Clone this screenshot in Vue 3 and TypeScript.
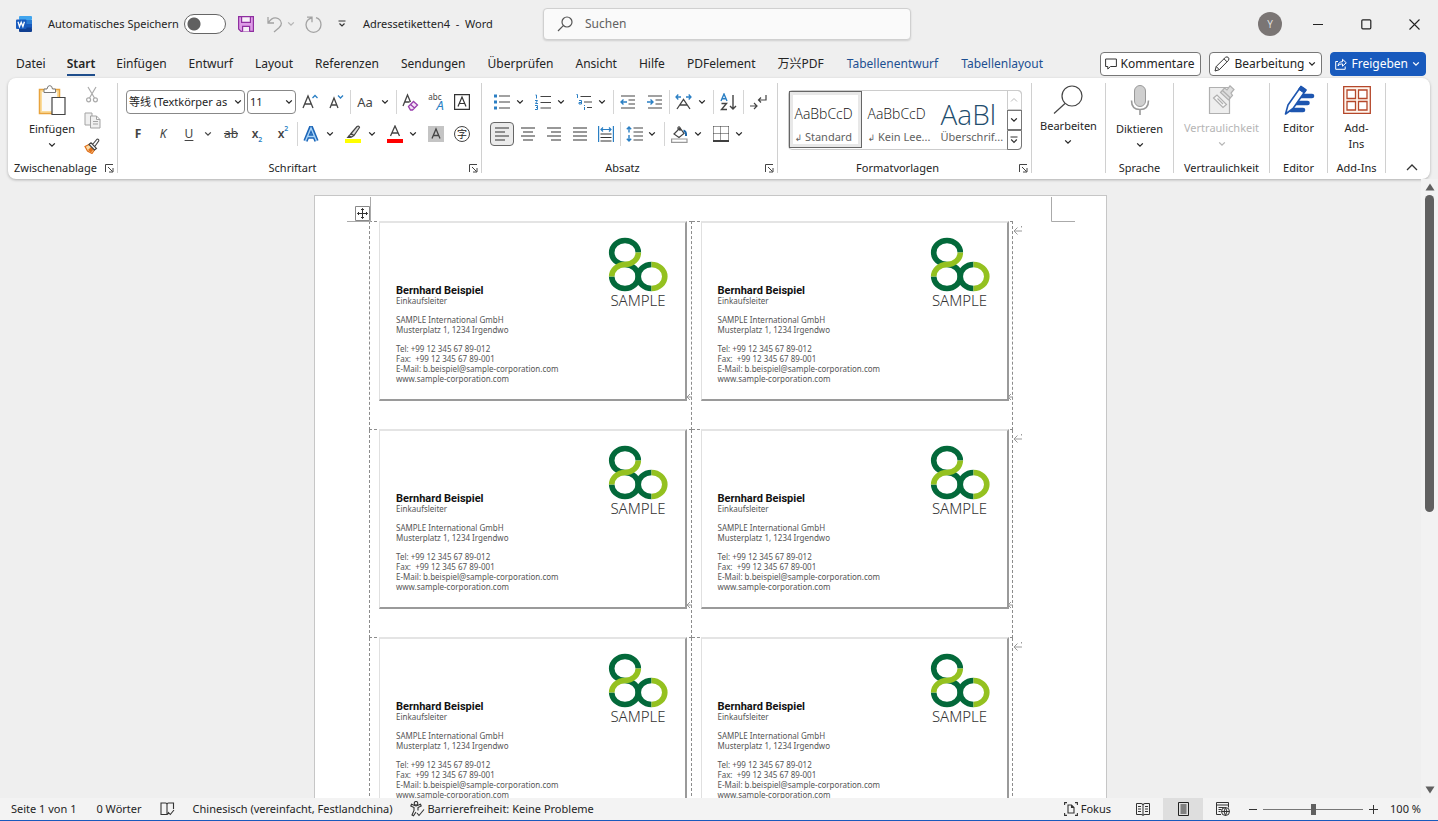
<script setup lang="ts">
import { h, ref } from 'vue'

interface Tab {
  label: string
  active?: boolean
  contextual?: boolean
}

const tabs: Tab[] = [
  { label: 'Datei' },
  { label: 'Start', active: true },
  { label: 'Einfügen' },
  { label: 'Entwurf' },
  { label: 'Layout' },
  { label: 'Referenzen' },
  { label: 'Sendungen' },
  { label: 'Überprüfen' },
  { label: 'Ansicht' },
  { label: 'Hilfe' },
  { label: 'PDFelement' },
  { label: '万兴PDF' },
  { label: 'Tabellenentwurf', contextual: true },
  { label: 'Tabellenlayout', contextual: true },
]

const contact: string[] = [
  'Tel: +99 12 345 67 89-012',
  'Fax:  +99 12 345 67 89-001',
  'E-Mail: b.beispiel@sample-corporation.com',
  'www.sample-corporation.com',
]

const zoom = ref(50)

const Chevron = () =>
  h('svg', { width: 8, height: 6, viewBox: '0 0 8 6', fill: 'none', stroke: 'currentColor', 'stroke-width': 1.3 }, [
    h('path', { d: 'M1.2 1.4 4 4.2 6.8 1.4' }),
  ])

const Launcher = () =>
  h('svg', { width: 9, height: 9, viewBox: '0 0 9 9', fill: 'none', stroke: '#444' }, [
    h('path', { d: 'M.5 8V.5H8M3 3l4.5 4.5M8 4v4H4' }),
  ])
</script>

<template>
  <div class="word">
    <header class="titlebar">
      <div class="quick">
        <svg class="logo" width="16" height="16" viewBox="0 0 16 16">
          <rect x="3" width="13" height="4" rx="1" fill="#41a5ee" />
          <rect x="3" y="4" width="13" height="4" fill="#2b7cd3" />
          <rect x="3" y="8" width="13" height="4" fill="#185abd" />
          <rect x="3" y="11.500" width="13" height="4.500" rx="1" fill="#103f91" />
          <rect y="3.500" width="10.500" height="9.500" rx="1" fill="#185abd" />
          <path d="M2 5.800 3.500 10.600 5.200 6.200 6.900 10.600 8.400 5.800" fill="none" stroke="#fff" stroke-width="1.300" />
        </svg>
        <label class="autosave">Automatisches Speichern <input type="checkbox" role="switch" class="switch" /></label>
        <button class="ico" aria-label="Speichern">
          <svg width="16" height="16" viewBox="0 0 16 16" fill="none" stroke="#8f2fa0" stroke-width="1.200">
            <path d="M.6.600h14.800v14.800H3L.600 13z" fill="#dd9be6" />
            <path d="M3.600.600h8.800v5.800H3.600zM4.600 15.400v-5h7v5" fill="#f7f0f8" />
          </svg>
        </button>
        <button class="ico undo" aria-label="Rückgängig">
          <svg width="16" height="17" viewBox="0 0 16 17" fill="none" stroke="#a3a3a3" stroke-width="1.300">
            <path d="M1 1v6h6M1.200 6.800C4 2.500 8 .800 11.500 2.800c4 2.400 3.500 6.200.5 9L7 16" />
          </svg>
        </button>
        <button class="ico faint undo-menu" aria-label="Rückgängig-Liste"><Chevron /></button>
        <button class="ico redo" aria-label="Wiederholen">
          <svg width="18" height="17" viewBox="0 0 18 17" fill="none" stroke="#a3a3a3" stroke-width="1.300">
            <path d="M2 1.200h5v5M7 1.600C3 3 1 5.500 1 8.800a7.500 7.500 0 0 0 15 0C16 5 14 2.500 11 1.600" />
          </svg>
        </button>
        <button class="ico customize" aria-label="Symbolleiste anpassen">
          <svg width="8" height="8" viewBox="0 0 8 8" fill="none" stroke="#333" stroke-width="1.200"><path d="M.5 1h7M1.500 3.500 4 6l2.500-2.500" /></svg>
        </button>
        <span class="doc-title">Adressetiketten4&nbsp; - &nbsp;Word</span>
      </div>
      <label class="search">
        <svg width="16" height="16" viewBox="0 0 16 16" fill="none" stroke="#555" stroke-width="1.200"><circle cx="10" cy="6" r="5" /><path d="M6.300 9.600 1 15" /></svg>
        <input type="text" placeholder="Suchen" aria-label="Suchen" />
      </label>
      <div class="window">
        <button class="avatar">Y</button>
        <button aria-label="Minimieren"><svg width="11" height="11" viewBox="0 0 11 11" stroke="#222" fill="none"><path d="M0 5.500h10" /></svg></button>
        <button aria-label="Maximieren"><svg width="11" height="11" viewBox="0 0 11 11" stroke="#222" fill="none" stroke-width="1.200"><rect x=".8" y=".8" width="9" height="9" rx="1" /></svg></button>
        <button aria-label="Schließen"><svg width="11" height="11" viewBox="0 0 11 11" stroke="#222" fill="none" stroke-width="1.100"><path d="m.5.500 10 10M10.500.500l-10 10" /></svg></button>
      </div>
    </header>

    <nav class="tabs">
      <button v-for="t in tabs" :key="t.label" class="tab" :class="{ active: t.active, contextual: t.contextual }">{{ t.label }}</button>
      <div class="actions">
        <button class="action comments">
          <svg width="12" height="12" viewBox="0 0 12 12" fill="none" stroke="#333"><path d="M.6 1h10.800v7.500H5.500L2.800 11V8.500H.600z" /></svg>
          Kommentare
        </button>
        <button class="action">
          <svg width="16" height="16" viewBox="0 0 16 16" fill="none" stroke="#333"><path d="M1 15l1.200-4.500L11.500 1.300q1.600-1 2.800.2t.2 2.800L5.300 13.700zM2.200 10.500l3.100 3.200M10 2.800l3.100 3.100" /></svg>
          Bearbeitung <Chevron />
        </button>
        <button class="action primary">
          <svg width="12" height="12" viewBox="0 0 12 12" fill="none" stroke="#fff"><path d="M3 3.500H.7v7.800h9.500V8.500M3 8c.3-3 2-4.300 4.500-4.300V1.300l3.800 3.500-3.800 3.400V5.900C5.500 5.900 4 6.500 3 8z" /></svg>
          Freigeben <Chevron />
        </button>
      </div>
    </nav>

    <section class="ribbon" aria-label="Menüband">
      <!-- Zwischenablage -->
      <div class="group clipboard">
        <div class="body">
          <button class="big">
            <svg width="28" height="31" viewBox="0 0 28 31" fill="none">
              <path d="M1.500 4.500h20v24h-20z" stroke="#e8a33d" stroke-width="1.500" fill="#fbdc9c" />
              <path d="M4 7h15v19H4z" fill="#fafafa" />
              <path d="M6 7.500V4h3q.5-3.400 2.800-3.400T14.500 4h3v3.500z" fill="#fff" stroke="#777" />
              <path d="M14 12.500h13v17H14z" fill="#fff" stroke="#444" stroke-width="1.200" />
            </svg>
            <span>Einfügen</span><Chevron />
          </button>
          <div class="stack">
            <button class="ico" aria-label="Ausschneiden">
              <svg width="12" height="17" viewBox="0 0 12 17" fill="none" stroke="#aaa" stroke-width="1.200"><path d="M2 1l6.500 11M10 1 3.500 12" /><circle cx="2.600" cy="13.800" r="2" /><circle cx="9.400" cy="13.800" r="2" /></svg>
            </button>
            <button class="ico" aria-label="Kopieren">
              <svg width="17" height="17" viewBox="0 0 17 17" fill="#f0f0f0" stroke="#a3a3a3"><path d="M1 1h7v12H1z" /><path d="M6.500 4h6l3.500 3.500V16H6.500zM12.500 4v3.500H16M9 9.500h5M9 12h5" /></svg>
            </button>
            <button class="ico" aria-label="Format übertragen">
              <svg width="16" height="16" viewBox="0 0 16 16" fill="none"><path d="M1 8.500 6 6l5 5-3 4.500L3.500 13z" fill="#fbdca8" stroke="#e0701a" stroke-width="1.200" /><path d="M4 12l3 2.500 3-3.500-3-2z" fill="#e0701a" /><path d="M5 6.500 7 4.800l5.500 5.700-2 1.500zM8.500 6.500 13 1.200q2-.4 1.800 1.600L10.800 8.500" stroke="#444" stroke-width="1.100" fill="#fff" /></svg>
            </button>
          </div>
        </div>
        <footer>Zwischenablage<button class="launch" aria-label="Zwischenablage öffnen"><Launcher /></button></footer>
      </div>

      <!-- Schriftart -->
      <div class="group font">
        <div class="body rows">
          <div class="row font-a">
            <label class="combo"><select aria-label="Schriftart"><option>等线 (Textkörper as</option></select><Chevron /></label>
            <label class="combo size"><select aria-label="Schriftgrad"><option>11</option></select><Chevron /></label>
            <button class="ico" aria-label="Schrift vergrößern"><svg width="16" height="18" viewBox="0 0 16 18" fill="none" stroke="#444" stroke-width="1.300"><path d="m1 15 5-12 5 12M3 11h6" /><path d="M10.500 5 13 2.500 15.500 5" stroke="#2a7fc4" /></svg></button>
            <button class="ico" aria-label="Schrift verkleinern"><svg width="16" height="18" viewBox="0 0 16 18" fill="none" stroke="#444" stroke-width="1.300"><path d="M2 15 6 5l4 10M3.500 12h5" /><path d="M10 2.500 12.500 5 15 2.500" stroke="#2a7fc4" /></svg></button>
            <i class="sep"></i>
            <button class="split"><span class="glyph">Aa</span><Chevron /></button>
            <i class="sep"></i>
            <button class="ico" aria-label="Formatierung löschen"><svg width="18" height="18" viewBox="0 0 18 18" fill="none" stroke="#444" stroke-width="1.300"><path d="m2 13 4.500-11L9.500 9M3.500 9h5" /><path d="m7.500 13.500 5-5 4 3.500-5 5h-2zM9.500 11.500l4 3.500" stroke="#9a3fae" fill="#f4e3f7" /></svg></button>
            <button class="ico phonetic" aria-label="Phonetische Zeichen"><small>abc</small><b>A</b></button>
            <button class="ico" aria-label="Zeichenrahmen"><svg width="16" height="16" viewBox="0 0 16 16" fill="none" stroke="#333" stroke-width="1.200"><path d="M.6.600h14.800v14.800H.600zM4 12.500l4-9.500 4 9.500M5.500 9.500h5" /></svg></button>
          </div>
          <div class="row font-b">
            <button class="ico fmt bold">F</button>
            <button class="ico fmt italic">K</button>
            <button class="split fmt"><span class="glyph under">U</span><Chevron /></button>
            <button class="ico fmt strike">ab</button>
            <button class="ico fmt script">x<sub>2</sub></button>
            <button class="ico fmt script">x<sup>2</sup></button>
            <i class="sep"></i>
            <button class="split" aria-label="Texteffekte"><span class="glyph"><svg width="16" height="16" viewBox="0 0 16 16" fill="none"><path d="M2.500 15 8 1.500 13.500 15M4.500 10.500h7" stroke="#1d66b8" stroke-width="4.400" /><path d="M2.500 15 8 2l5.500 13M4.500 10.500h7" stroke="#a9d4f8" stroke-width="1.400" /></svg></span><Chevron /></button>
            <button class="split" aria-label="Texthervorhebung"><span class="glyph"><svg width="16" height="18" viewBox="0 0 16 18" fill="none"><path d="M6 8.500 12 1.500q2-1 2.500 1L9 10.500zM6 8.500l-2 2.500 2.500 1L9 10.500" stroke="#444" stroke-width="1.200" fill="#ddd" /><path d="M3.500 10.500 1.500 13h4l1-1z" fill="#444" /><path d="M0 14h16v4H0z" fill="#ff0" /></svg></span><Chevron /></button>
            <button class="split" aria-label="Schriftfarbe"><span class="glyph"><svg width="16" height="18" viewBox="0 0 16 18" fill="none"><path d="m3.500 11 4.500-10 4.500 10M5 8h6" stroke="#444" stroke-width="1.300" /><path d="M0 14h16v4H0z" fill="red" /></svg></span><Chevron /></button>
            <button class="ico" aria-label="Zeichenschattierung"><svg width="16" height="16" viewBox="0 0 16 16" fill="none" stroke="#444" stroke-width="1.300"><path d="M0 0h16v16H0z" fill="#c4c4c4" stroke="none" /><path d="m4 12.500 4-9.500 4 9.500M5.500 9.500h5" /></svg></button>
            <button class="ico enclosed">字</button>
          </div>
        </div>
        <footer>Schriftart<button class="launch" aria-label="Schriftart öffnen"><Launcher /></button></footer>
      </div>

      <!-- Absatz -->
      <div class="group paragraph">
        <div class="body rows">
          <div class="row para-a">
            <button class="split" aria-label="Aufzählung"><span class="glyph"><svg width="16" height="16" viewBox="0 0 16 16"><path d="M0 .5h3v3H0zM0 6.500h3v3H0zM0 12.500h3v3H0z" fill="#2a7fc4" /><path d="M5 2h11M5 8h11M5 14h11" stroke="#444" stroke-width="1.200" /></svg></span><Chevron /></button>
            <button class="split" aria-label="Nummerierung"><span class="glyph"><svg width="16" height="16" viewBox="0 0 16 16" fill="none" stroke="#2a7fc4"><path d="M.5 1h1v3.500M0 6.500h2.500L.5 9.500h2.500M0 11.500h2.500v4H0M1 13.500h1.500" /><path d="M5.500 2.500H16M5.500 8.500H16M5.500 14H16" stroke="#444" stroke-width="1.200" /></svg></span><Chevron /></button>
            <button class="split" aria-label="Liste mit mehreren Ebenen"><span class="glyph"><svg width="16" height="16" viewBox="0 0 16 16" fill="none" stroke="#2a7fc4"><path d="M.5.500h1V4M3 6.500h2.500v3.500H3V8.500h2.500M8.500 11v1M8.500 13v3" /><path d="M4.500 2.500H15M8 8h8M11 13.500h5" stroke="#444" stroke-width="1.200" /></svg></span><Chevron /></button>
            <i class="sep"></i>
            <button class="ico" aria-label="Einzug verkleinern"><svg width="16" height="14" viewBox="0 0 16 14" fill="none" stroke="#444" stroke-width="1.200"><path d="M1 1h14M8.500 5H15M8.500 9H15M1 13h14" /><path d="M7 7H1M3.500 4.500 1 7l2.500 2.500" stroke="#2a7fc4" stroke-width="1.400" /></svg></button>
            <button class="ico" aria-label="Einzug vergrößern"><svg width="16" height="14" viewBox="0 0 16 14" fill="none" stroke="#444" stroke-width="1.200"><path d="M1 1h14M8.500 5H15M8.500 9H15M1 13h14" /><path d="M0 7h6M3.500 4.500 6 7 3.500 9.500" stroke="#2a7fc4" stroke-width="1.400" /></svg></button>
            <i class="sep"></i>
            <button class="split" aria-label="Asiatisches Layout"><span class="glyph"><svg width="17" height="16" viewBox="0 0 17 16" fill="none" stroke="#444" stroke-width="1.300"><path d="m2 15 6.500-9.500L15 15M5 11h7" /><path d="M6 3H1M3.300.500 1 3l2.300 2.500M11 3h5M13.700.500 16 3l-2.300 2.500" stroke="#2a7fc4" /></svg></span><Chevron /></button>
            <i class="sep"></i>
            <button class="ico" aria-label="Sortieren"><svg width="17" height="18" viewBox="0 0 17 18" fill="none" stroke="#444" stroke-width="1.400"><path d="M1.500 10.500h5l-5 6h5.500M13 2v14M10 13l3 3 3-3" /><path d="m1 8 3-7 3 7M2 5.700h4" stroke="#2a7fc4" /></svg></button>
            <i class="sep"></i>
            <button class="ico" aria-label="Absatzmarken"><svg width="17" height="17" viewBox="0 0 17 17" fill="none" stroke="#444" stroke-width="1.200"><path d="M16 1v5H8.500M11 3.500 8.500 6 11 8.500M0 12h6.500M4 9l3 3-3 3" /></svg></button>
          </div>
          <div class="row para-b">
            <button class="ico pressed" aria-label="Linksbündig"><svg width="16" height="14" viewBox="0 0 16 14" stroke="#333" stroke-width="1.200"><path d="M1 1h14M1 5h10M1 9h14M1 13h10" /></svg></button>
            <button class="ico" aria-label="Zentriert"><svg width="16" height="14" viewBox="0 0 16 14" stroke="#333" stroke-width="1.200"><path d="M1 1h14M3 5h10M1 9h14M3 13h10" /></svg></button>
            <button class="ico" aria-label="Rechtsbündig"><svg width="16" height="14" viewBox="0 0 16 14" stroke="#333" stroke-width="1.200"><path d="M1 1h14M5 5h10M1 9h14M5 13h10" /></svg></button>
            <button class="ico" aria-label="Blocksatz"><svg width="16" height="14" viewBox="0 0 16 14" stroke="#333" stroke-width="1.200"><path d="M1 1h14M1 5h14M1 9h14M1 13h14" /></svg></button>
            <button class="ico" aria-label="Verteilt"><svg width="16" height="16" viewBox="0 0 16 16" fill="none" stroke="#333" stroke-width="1.200"><path d="M2.500 8h11M2.500 11.500h11M2.500 15h11" /><path d="M.6 0v16M15.400 0v16M3 3.500h10M5 1.500l-2 2 2 2M11 1.500l2 2-2 2" stroke="#2a7fc4" /></svg></button>
            <i class="sep"></i>
            <button class="split" aria-label="Zeilenabstand"><span class="glyph"><svg width="17" height="16" viewBox="0 0 17 16" fill="none" stroke="#444" stroke-width="1.200"><path d="M7.500 2H17M7.500 6H17M7.500 10H17M7.500 14H17" /><path d="M3 1v5.500M.8 3.200 3 1l2.200 2.200M3 9v6M.8 12.800 3 15l2.200-2.200" stroke="#2a7fc4" stroke-width="1.400" /></svg></span><Chevron /></button>
            <i class="sep"></i>
            <button class="split" aria-label="Schattierung"><span class="glyph"><svg width="17" height="17" viewBox="0 0 17 17" fill="none" stroke="#444" stroke-width="1.200"><path d="m3 8 6-6 4 5.500L8 11.500zM7 4V1.500Q8 0 9 1.500V5" /><path d="M12.500 4.500q3 1 2.500 5.500" stroke="#1d66a8" stroke-width="2" /><path d="M.6 13h15.400v3.300H.600z" stroke="#999" /></svg></span><Chevron /></button>
            <button class="split" aria-label="Rahmen"><span class="glyph"><svg width="16" height="16" viewBox="0 0 16 16" fill="none" stroke="#333"><path d="M.5.500h15M.5 7.500h15M.5.500v14M7.500.500v14M15.500.500v14" stroke-dasharray="1 1" /><path d="M0 15h16" stroke="#111" stroke-width="1.600" /></svg></span><Chevron /></button>
          </div>
        </div>
        <footer>Absatz<button class="launch" aria-label="Absatz öffnen"><Launcher /></button></footer>
      </div>

      <!-- Formatvorlagen -->
      <div class="group styles">
        <div class="body">
          <div class="gallery">
            <button class="style chosen"><span class="sample">AaBbCcD</span><span class="name"><em>↲</em> Standard</span></button>
            <button class="style"><span class="sample">AaBbCcD</span><span class="name"><em>↲</em> Kein Lee...</span></button>
            <button class="style"><span class="sample heading">AaBl</span><span class="name">Überschrif...</span></button>
            <div class="pager">
              <button class="off" aria-label="Zurück"><svg width="8" height="6" viewBox="0 0 8 6" fill="none" stroke="#bbb"><path d="M1 4.500 4 1.500l3 3" /></svg></button>
              <button aria-label="Weiter"><Chevron /></button>
              <button aria-label="Alle Formatvorlagen"><svg width="8" height="8" viewBox="0 0 8 8" fill="none" stroke="#333" stroke-width="1.200"><path d="M.5 1h7M1.200 3.500 4 6.300l2.800-2.800" /></svg></button>
            </div>
          </div>
        </div>
        <footer>Formatvorlagen<button class="launch" aria-label="Formatvorlagen öffnen"><Launcher /></button></footer>
      </div>

      <div class="group edit">
        <div class="body">
          <button class="big">
            <svg width="30" height="29" viewBox="0 0 30 29" fill="none" stroke="#444" stroke-width="1.200"><circle cx="19" cy="11" r="10" /><path d="M12 18.500 1 28.500" /></svg>
            <span>Bearbeiten</span><Chevron />
          </button>
        </div>
      </div>

      <div class="group voice">
        <div class="body">
          <button class="big">
            <svg width="20" height="31" viewBox="0 0 20 31" fill="none" stroke="#999"><rect x="4.500" y=".5" width="11" height="21" rx="5.500" fill="#cfcfcf" /><path d="M1.500 15.500q0 9 8.500 9t8.500-9M10 24.500V30" stroke-width="1.600" /></svg>
            <span>Diktieren</span><Chevron />
          </button>
        </div>
        <footer class="plain">Sprache</footer>
      </div>

      <div class="group sens">
        <div class="body">
          <button class="big disabled" disabled>
            <svg width="28" height="30" viewBox="0 0 28 30" fill="none" stroke="#b0b0b0" stroke-width="1.200"><path d="M1.500 2.500h20v26h-20z" fill="#eee" /><path d="m5.500 13 3.500-3 9.500 9.500-3.500 3zM9.500 13.500l5.500 5.500" fill="#f6f6f6" /><path d="m12.500 7.500 4-4.500 2.500 2L22 .800l4 3.700L23 8l1.500 2.500-4 4.500z" fill="#ddd" /><path d="m14.500 5.500 8 7.500" /></svg>
            <span>Vertraulichkeit</span><Chevron />
          </button>
        </div>
        <footer class="plain">Vertraulichkeit</footer>
      </div>

      <div class="group short">
        <div class="body">
          <button class="big">
            <svg width="32" height="30" viewBox="0 0 32 30" fill="none" stroke="#1e56b0" stroke-linecap="round"><path d="M17 11h12" stroke-width="4.600" /><path d="M12 18h12.500" stroke-width="4.600" /><path d="M8 25h12" stroke-width="4.600" /><path d="M2.500 29 5 20 18 1.500l5 3.500-13 18.500z" fill="#fff" stroke-width="1.600" stroke-linejoin="round" /><path d="m18 1.500 5 3.500-2 3-5-3.500z" fill="#1e56b0" /></svg>
            <span>Editor</span>
          </button>
        </div>
        <footer class="plain">Editor</footer>
      </div>

      <div class="group short">
        <div class="body">
          <button class="big">
            <svg width="28" height="30" viewBox="0 0 28 30" fill="none" stroke="#b5472a" stroke-width="1.300"><path d="M.7 1.700h26.600v26.600H.700z" fill="#fff6ee" /><path d="M4 5h8.500v8.500H4zM15.500 5H24v8.500h-8.500zM4 16.500h8.500V25H4zM15.500 16.500H24V25h-8.500z" fill="#fff" /></svg>
            <span>Add-<br />Ins</span>
          </button>
        </div>
        <footer class="plain">Add-Ins</footer>
      </div>

      <button class="collapse" aria-label="Menüband reduzieren"><svg width="12" height="7" viewBox="0 0 12 7" fill="none" stroke="#333" stroke-width="1.300"><path d="M1 6l5-5 5 5" /></svg></button>
    </section>

    <main class="workspace">
      <div class="canvas">
        <article class="page">
          <svg class="corner left" width="24" height="25" viewBox="0 0 24 25" fill="none" stroke="#aaa"><path d="M23.500 0v24.500M0 24.500h24" /></svg>
          <svg class="corner right" width="24" height="25" viewBox="0 0 24 25" fill="none" stroke="#aaa"><path d="M.5 0v24.500H24" /></svg>
          <svg class="mover" width="15" height="15" viewBox="0 0 15 15" fill="#fff" stroke="#888"><path d="M.5.500h14v14H.500z" /><path d="M7.500 2.500v10M2.500 7.500h10M6 4l1.500-1.500L9 4M6 11l1.500 1.500L9 11M4 6 2.500 7.500 4 9M11 6l1.500 1.500L11 9" stroke="#333" fill="none" /></svg>
          <table class="labels">
            <tbody>
              <tr v-for="r in 3" :key="r">
                <td v-for="c in 2" :key="c">
                  <div class="card">
                    <div class="person">
                      <strong>Bernhard Beispiel</strong>
                      <p>Einkaufsleiter</p>
                      <p class="gap">SAMPLE International GmbH</p>
                      <p>Musterplatz 1, 1234 Irgendwo</p>
                      <p v-for="(line, i) in contact" :key="line" :class="{ gap: i === 0 }">{{ line }}</p>
                    </div>
                    <div class="brand">
                      <svg width="60" height="55" viewBox="0 0 60 55" fill="none" stroke-width="5.600">
                        <path d="M30.300 15.500A13.300 12 0 1 0 17 27.500" stroke="#03693a" />
                        <path d="M17 27.500A13.300 12 0 1 1 3.700 39.500" stroke="#03693a" />
                        <path d="M43.500 27.500a13.300 12 0 0 0 0 24" stroke="#03693a" />
                        <path d="M43.500 27.500a13.300 12 0 0 1 0 24" stroke="#94c120" />
                        <path d="M30.300 15.500A13.300 12 0 0 1 17 27.500 13.300 12 0 0 0 3.700 39.500" stroke="#94c120" />
                      </svg>
                      <span>SAMPLE</span>
                    </div>
                  </div>
                  <svg class="mark cell-end" width="6" height="8" viewBox="0 0 6 8" fill="none" stroke="#999"><path d="M6 4H1M4 1 1 4l3 3" /></svg>
                  <svg v-if="c === 2" class="mark row-end" width="9" height="10" viewBox="0 0 9 10" fill="none" stroke="#999"><path d="M8.500 0v1.500M9 5H1M4.500 1.500 1 5l3.500 3.500" /></svg>
                </td>
              </tr>
            </tbody>
          </table>
        </article>
      </div>
      <div class="scroll" aria-hidden="true">
        <svg width="10" height="8" viewBox="0 0 10 8"><path d="M5 .5 9.500 7.500H.500z" fill="#606060" /></svg>
        <div class="track"><div class="thumb"></div></div>
        <svg width="10" height="8" viewBox="0 0 10 8"><path d="M5 7.500.500.500h9z" fill="#606060" /></svg>
      </div>
    </main>

    <footer class="status">
      <span>Seite 1 von 1</span>
      <span>0 Wörter</span>
      <svg width="15" height="14" viewBox="0 0 15 14" fill="none" stroke="#333" stroke-width="1.100"><path d="M7 2v10.500H1V1h4.500Q7 1 7 2.500 7 1 8.500 1h5v6M7 12.500 9 11" /><path d="m8 10 2.300 2.500L14 8" /></svg>
      <span class="lang">Chinesisch (vereinfacht, Festlandchina)</span>
      <span class="access">
        <svg width="15" height="16" viewBox="0 0 15 16" fill="none" stroke="#333" stroke-width="1.100"><circle cx="6" cy="2.300" r="1.800" /><path d="M6 5 1.500 3.200.800 5 4 6.500v3L2 14l1.500.8L6 11M6 5l4.500-1.800.7 1.800L8 6.500v3M7 12l2 2.500 5-6" /></svg>
        Barrierefreiheit: Keine Probleme
      </span>
      <div class="view">
        <button class="focus"><svg width="14" height="14" viewBox="0 0 14 14" fill="none" stroke="#333" stroke-width="1.100"><path d="M3 .6H.600V3M11 .6h2.400V3M3 13.400H.600V11M11 13.400h2.400V11M4 3h3.500L10 5.500V11H4zM7.500 3v2.500H10" /></svg>Fokus</button>
        <button class="mode" aria-label="Lesemodus"><svg width="14" height="13" viewBox="0 0 14 13" fill="none" stroke="#333"><path d="M7 1.500v11M.5.500H5q2 0 2 1.500Q7 .5 9 .5h4.500v11H9q-2 0-2 1 0-1-2-1H.500zM2 3.500h3M2 6h3M2 8.500h3M9 3.500h3M9 6h3M9 8.500h3" /></svg></button>
        <button class="mode on" aria-label="Drucklayout"><svg width="11" height="14" viewBox="0 0 11 14" fill="none" stroke="#222"><path d="M.5.500h10v13H.500zM2.500 3h6M2.500 5h6M2.500 7h6M2.500 9h6M2.500 11h6" /></svg></button>
        <button class="mode" aria-label="Weblayout"><svg width="14" height="14" viewBox="0 0 14 14" fill="none" stroke="#333"><path d="M5 12.500H.500V.500h12v5M.5 3h12M2.500 5.500h7M2.500 7.500h3M2.500 9.500h2" /><circle cx="9.500" cy="9.500" r="4" fill="#f3f3f3" /><path d="M5.500 9.500h8M9.500 5.500q-3 4 0 8 3-4 0-8" /></svg></button>
        <button class="step" aria-label="Verkleinern"><svg width="9" height="9" viewBox="0 0 9 9" stroke="#333"><path d="M0 4.500h8" /></svg></button>
        <input v-model="zoom" type="range" min="0" max="100" aria-label="Zoom" />
        <button class="step" aria-label="Vergrößern"><svg width="9" height="9" viewBox="0 0 9 9" stroke="#333"><path d="M0 4.500h9M4.500 0v9" /></svg></button>
        <button class="percent">100 %</button>
      </div>
    </footer>
  </div>
</template>

<style>
body {
  margin: 0;
  overflow: hidden;
}
</style>

<style scoped>
.word {
  display: flex;
  flex-direction: column;
  height: 100vh;
  background: #efefef;
  color: #242424;
  font: 11px/16px "Noto Sans", "Noto Sans CJK SC", sans-serif;
}
.word * {
  box-sizing: border-box;
}
button,
input,
select {
  margin: 0;
  padding: 0;
  border: 0;
  background: none;
  color: inherit;
  font: inherit;
}
svg {
  flex: none;
  display: block;
}

/* title bar */
.titlebar {
  display: grid;
  grid-template-columns: 1fr 368px 1fr;
  align-items: center;
  height: 48px;
  padding-left: 16px;
}
.quick {
  display: flex;
  align-items: center;
  white-space: nowrap;
}
.autosave {
  display: flex;
  align-items: center;
  gap: 5px;
  margin: 0 12px 0 16px;
}
.switch {
  appearance: none;
  width: 42px;
  height: 20px;
  border: 1px solid #666;
  border-radius: 10px;
  background: radial-gradient(circle at 9px 9px, #606060 6px, #fff 7px);
}
.ico {
  display: flex;
  align-items: center;
  justify-content: center;
}
.undo {
  margin-left: 13px;
}
.undo-menu {
  margin-left: 4px;
}
.faint {
  color: #b5b5b5;
}
.redo {
  margin-left: 10px;
}
.customize {
  margin-left: 15px;
}
.doc-title {
  margin-left: 17px;
}
.search {
  display: flex;
  align-items: center;
  gap: 12px;
  height: 32px;
  padding: 0 13px;
  border: 1px solid #d0d0d0;
  border-radius: 4px;
  background: #fafafa;
  box-shadow: 0 1px 2px #0002;
}
.search input {
  flex: 1;
  outline: 0;
  font-size: 12px;
}
.search input::placeholder {
  color: #616161;
}
.window {
  display: flex;
  justify-content: flex-end;
  align-items: center;
}
.window button {
  display: flex;
  justify-content: center;
  width: 48px;
}
.window .avatar {
  width: 24px;
  height: 24px;
  margin-right: 12px;
  border-radius: 50%;
  background: #7a7574;
  color: #ddd;
  font-size: 10px;
  line-height: 24px;
}

/* tabs */
.tabs {
  display: flex;
  align-items: center;
  gap: 22px;
  height: 30px;
  padding: 1px 12px 0 16px;
  font-size: 12px;
  white-space: nowrap;
}
.tab {
  height: 24px;
  padding-top: 2px;
  border-bottom: 2px solid transparent;
  line-height: 20px;
}
.tab.active {
  margin: 0 -1px;
  border-color: #1f4e8c;
  font-weight: 600;
}
.tab.contextual {
  margin-left: 1px;
  color: #1d4f91;
}
.actions {
  display: flex;
  gap: 8px;
  margin-left: auto;
}
.action {
  display: flex;
  align-items: center;
  gap: 4px;
  height: 24px;
  padding: 0 5px 0 4px;
  border: 1px solid #777;
  border-radius: 4px;
  background: #fff;
}
.action.comments {
  padding-right: 6px;
}
.action.primary {
  border-color: #185abd;
  background: #185abd;
  color: #fff;
}

/* ribbon */
.ribbon {
  display: flex;
  height: 101px;
  margin: 0 8px;
  padding: 5px 0 6px;
  border-radius: 8px;
  background: #fff;
  box-shadow: 0 1px 3px #0004;
}
.group {
  display: flex;
  flex-direction: column;
  flex: none;
  border-right: 1px solid #d0d0d0;
}
.clipboard {
  width: 110px;
}
.font {
  width: 364px;
}
.paragraph {
  width: 296px;
}
.styles {
  width: 254px;
}
.edit {
  width: 74px;
}
.voice {
  width: 68px;
}
.sens {
  width: 96px;
}
.short {
  width: 58px;
}
.body {
  display: flex;
  justify-content: center;
  flex: 1;
}
.group footer {
  position: relative;
  height: 10px;
  padding-right: 14px;
  line-height: 10px;
  text-align: center;
}
.group footer.plain {
  padding-right: 0;
}
.launch {
  position: absolute;
  right: 3px;
  top: 1px;
}
.big {
  display: flex;
  flex-direction: column;
  align-items: center;
  padding-top: 2px;
}
.big > svg:first-child {
  margin-bottom: 5px;
}
.big > svg:last-child {
  margin-top: 5px;
}
.edit .big > svg:first-child {
  margin-bottom: 4px;
}
.disabled {
  color: #b5b5b5;
}
.stack {
  display: flex;
  flex-direction: column;
  justify-content: space-between;
  align-items: center;
  width: 16px;
  height: 71px;
  padding-top: 3px;
  margin-left: 9px;
}
.clipboard .body {
  justify-content: flex-end;
  padding-right: 17px;
}
.rows {
  flex-direction: column;
  justify-content: flex-start;
  gap: 8px;
  padding: 7px 0 0 8px;
}
.body.rows {
  justify-content: flex-start;
}
.row {
  display: grid;
  align-items: center;
  height: 24px;
}
.font-a {
  grid-template-columns: 121px 50px 26px 26px 2px 44px 2px 26px 26px 26px;
}
.font-b {
  grid-template-columns: 24px 26px 42px 26px 26px 26px 2px 42px 42px 41px 26px 26px;
}
.para-a {
  grid-template-columns: 40px 41px 41px 2px 28px 26px 2px 42px 2px 28px 2px 28px;
}
.para-b {
  grid-template-columns: 24px 28px 24px 28px 24px 4px 40px 4px 42px 41px;
}
.row > * {
  height: 24px;
}
.sep {
  justify-self: center;
  width: 1px;
  background: #d5d5d5;
}
.split {
  display: flex;
  align-items: center;
  padding-right: 6px;
}
.glyph {
  display: flex;
  justify-content: center;
  flex: 1;
  margin-right: 2px;
}
.combo {
  display: flex;
  align-items: center;
  width: 119px;
  padding: 0 2px;
  border: 1px solid #888;
  border-radius: 4px;
}
.combo.size {
  width: 49px;
}
.combo select {
  appearance: none;
  flex: 1;
  min-width: 0;
}
.font-a .split .glyph {
  font-size: 13px;
  color: #444;
}
.phonetic {
  align-items: flex-start;
  color: #444;
}
.phonetic small {
  margin-top: 2px;
  font-size: 8px;
  line-height: 9px;
}
.phonetic b {
  margin: 9px 0 0 -5px;
  color: #2a7fc4;
  font-size: 13px;
  font-style: italic;
  font-weight: 400;
  line-height: 13px;
}
.fmt {
  color: #444;
  font-size: 12px;
}
.bold {
  font-weight: 700;
}
.italic {
  font-style: italic;
}
.under {
  text-decoration: underline;
  text-underline-offset: 2px;
}
.strike {
  text-decoration: line-through;
}
.script {
  font-weight: 600;
}
.script sub,
.script sup {
  color: #2a7fc4;
  font-size: 7px;
  line-height: 8px;
}
.script sub {
  align-self: flex-end;
  margin-bottom: 2px;
}
.script sup {
  align-self: flex-start;
  margin-top: 3px;
}
.enclosed {
  justify-self: center;
  width: 16px;
  height: 16px;
  border: 1px solid #444;
  border-radius: 50%;
  font-size: 10px;
  line-height: 12px;
}
.pressed {
  border: 1px solid #666;
  border-radius: 4px;
  background: #ebebeb;
}
.gallery {
  display: flex;
  width: 234px;
  height: 60px;
  margin-top: 7px;
  border: 1px solid #ccc;
  border-radius: 4px;
}
.style {
  display: flex;
  flex-direction: column;
  justify-content: flex-end;
  flex: 1;
  min-width: 0;
  height: 57px;
  padding: 0 5px 4px 6px;
  text-align: left;
}
.chosen {
  padding: 0 4px 3px 5px;
  border: 1px solid #666;
  box-shadow: inset 0 0 0 3px #e8e8e8;
}
.sample {
  margin-bottom: 6px;
  color: #111;
  font: 300 14px/20px "Open Sans", sans-serif;
  white-space: nowrap;
}
.sample.heading {
  margin-bottom: 0;
  color: #1f4e6e;
  font-size: 28px;
  line-height: 32px;
}
.name {
  color: #616161;
  line-height: 14px;
  white-space: nowrap;
}
.name em {
  font: 9px "DejaVu Sans", sans-serif;
}
.pager {
  display: flex;
  flex-direction: column;
  width: 15px;
  margin: -1px;
}
.pager button {
  display: flex;
  align-items: center;
  justify-content: center;
  flex: 1;
  border: 1px solid #777;
}
.pager .off {
  border-color: #ccc;
  border-radius: 0 4px 0 0;
}
.pager button:last-child {
  border-radius: 0 0 4px 0;
}
.collapse {
  align-self: flex-end;
  margin: 0 12px 2px auto;
}

/* document */
.workspace {
  display: flex;
  flex: 1;
  min-height: 0;
}
.canvas {
  display: flex;
  justify-content: center;
  align-items: flex-start;
  flex: 1;
  overflow: hidden;
  padding-top: 16px;
}
.page {
  position: relative;
  flex: none;
  width: 793px;
  min-height: 1122px;
  padding: 25px 0 0 54px;
  border: 1px solid #c6c6c6;
  background: #fff;
}
.corner {
  position: absolute;
  top: 1px;
}
.corner.left {
  left: 32px;
}
.corner.right {
  left: 736px;
}
.mover {
  position: absolute;
  top: 10px;
  left: 40px;
}
.labels {
  width: 644px;
  border-collapse: collapse;
  table-layout: fixed;
}
.labels td {
  position: relative;
  height: 208px;
  padding: 0 0 0 9px;
  border: 1px dashed #8c8c8c;
  vertical-align: top;
}
.card {
  position: relative;
  display: flex;
  justify-content: space-between;
  width: 308px;
  height: 180px;
  margin-top: -1px;
  padding: 14px 17px 0 16px;
  border: solid;
  border-width: 2px 2px 2px 1px;
  border-color: #e4e4e4 #9a9a9a #9a9a9a #e0e0e0;
  background: #fff;
}
.person {
  padding-top: 48px;
  color: #555;
  font-size: 8px;
  line-height: 10px;
  white-space: pre;
}
.person strong {
  display: block;
  margin-bottom: -1px;
  color: #111;
  font: 700 11px/12px Roboto, sans-serif;
}
.person p {
  margin: 0;
}
.person .gap {
  margin-top: 9px;
}
.brand {
  display: flex;
  flex-direction: column;
  align-items: center;
  width: 60px;
  color: #333;
  font-size: 15px;
  font-weight: 300;
  line-height: 17px;
}
.mark {
  position: absolute;
}
.cell-end {
  right: -1px;
  top: 171px;
}
.row-end {
  right: -10px;
  top: 4px;
}
.scroll {
  display: flex;
  flex-direction: column;
  align-items: center;
  width: 17px;
  padding: 4px 0;
  background: #f2f2f2;
}
.track {
  flex: 1;
  width: 9px;
  margin: 4px 0;
}
.thumb {
  height: 54%;
  border-radius: 5px;
  background: #606060;
}

/* status bar */
.status {
  display: flex;
  align-items: center;
  height: 23px;
  padding-left: 11px;
  border-bottom: 1px solid #185abd;
  background: #f3f3f3;
  white-space: nowrap;
}
.status > span + span {
  margin-left: 20px;
}
.status > svg {
  margin-left: 18px;
}
.status .lang,
.status > .lang + .access {
  margin-left: 18px;
}
.access {
  display: flex;
  align-items: center;
  gap: 2px;
}
.view {
  display: flex;
  align-items: center;
  align-self: stretch;
  margin-left: auto;
}
.view button {
  display: flex;
  align-items: center;
  justify-content: center;
  height: 100%;
}
.view .focus {
  gap: 3px;
  margin-right: 12px;
}
.mode {
  width: 40px;
}
.on {
  background: #dedede;
}
.step {
  width: 20px;
}
.view input {
  appearance: none;
  width: 100px;
  height: 11px;
  background: linear-gradient(#777, #777) center / 100% 1px no-repeat;
}
.view input::-webkit-slider-thumb {
  appearance: none;
  width: 5px;
  height: 11px;
  background: #606060;
}
.percent {
  width: 37px;
  margin: 0 14px 0 4px;
}
</style>
